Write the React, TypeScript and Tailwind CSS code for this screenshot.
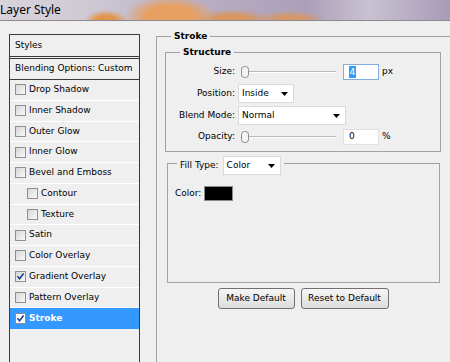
import React from 'react';

/* Photoshop "Layer Style" dialog - Stroke page */

const STYLES = [
  { label: 'Drop Shadow', checked: false, indent: false },
  { label: 'Inner Shadow', checked: false, indent: false },
  { label: 'Outer Glow', checked: false, indent: false },
  { label: 'Inner Glow', checked: false, indent: false },
  { label: 'Bevel and Emboss', checked: false, indent: false },
  { label: 'Contour', checked: false, indent: true },
  { label: 'Texture', checked: false, indent: true },
  { label: 'Satin', checked: false, indent: false },
  { label: 'Color Overlay', checked: false, indent: false },
  { label: 'Gradient Overlay', checked: true, indent: false },
  { label: 'Pattern Overlay', checked: false, indent: false },
  { label: 'Stroke', checked: true, indent: false, active: true },
];

function Check({ checked, white }: { checked: boolean; white?: boolean }) {
  return (
    <span
      className={
        white
          ? 'w-[11px] h-[11px] shrink-0 border border-[#8f8f8f] bg-white flex items-center justify-center'
          : 'w-[11px] h-[11px] shrink-0 border border-[#8f8f8f] bg-linear-to-br from-[#d6d6d6] to-[#fafafa] flex items-center justify-center'
      }
    >
      {checked && (
        <svg width="9" height="9" viewBox="0 0 9 9">
          <path d="M1.5 4.3 L3.6 6.8 L7.6 1.6" fill="none" stroke="#1f3c8c" strokeWidth="1.6" />
        </svg>
      )}
    </span>
  );
}

function Arrow() {
  return (
    <svg width="7" height="4" viewBox="0 0 7 4" className="shrink-0">
      <path d="M0 0 H7 L3.5 4 Z" fill="#000" />
    </svg>
  );
}

function Select({ value, w }: { value: string; w: string }) {
  return (
    <div className={`${w} h-[19px] bg-white border border-[#dadada] flex items-center justify-between pl-[3px] pr-[5px]`}>
      <span>{value}</span>
      <Arrow />
    </div>
  );
}

function Slider() {
  return (
    <div className="relative w-[95px] h-[12px] flex items-center">
      <div className="w-full h-[2px] border-t border-[#b9b9b9] bg-white" />
      {/* knob */}
      <svg width="8" height="12" viewBox="0 0 8 12" className="absolute left-0 top-0">
        <rect x="0.5" y="0.5" width="7" height="11" rx="3" fill="#f4f4f4" stroke="#8a8a8a" />
      </svg>
    </div>
  );
}

export default function App() {
  return (
    <div className="w-[450px] h-[362px] overflow-hidden bg-[#efefef] font-['DejaVu_Sans',sans-serif] text-[9px] text-black">
      {/* title bar, blurred desktop showing through */}
      <div className="h-[21px] border-b border-[#8c8a90] flex items-center bg-[radial-gradient(22px_11px_at_106px_21px,#e3944a_45%,transparent),radial-gradient(46px_20px_at_170px_16px,#e8a060_50%,transparent),radial-gradient(40px_12px_at_232px_21px,#d9965e_45%,transparent),radial-gradient(36px_11px_at_290px_21px,#d69868_40%,transparent),linear-gradient(to_right,#d8d3db_0%,#d0cad5_18%,#bbb1c5_40%,#ab9fba_68%,#c9c2d1_82%,#a79bb8_100%)]">
        <span className="font-['Noto_Sans',sans-serif] text-[12px] leading-none">Layer Style</span>
      </div>

      <div className="flex items-start">
        {/* styles list */}
        <div className="ml-[9px] mt-[13px] w-[131px] h-[340px] border border-[#3a3a3a] shrink-0">
          <div className="h-[22px] border-b border-[#3a3a3a] flex items-center pl-[5px]">Styles</div>
          <div className="mt-[1px] h-[22px] border-y border-[#3a3a3a] flex items-center pl-[5px]">Blending Options: Custom</div>
          {STYLES.map((s) => (
            <div
              key={s.label}
              className={
                s.active
                  ? 'h-[20.75px] flex items-center gap-[3px] pl-[5px] bg-[#3399ff] text-white font-bold'
                  : s.indent
                    ? 'h-[20.75px] flex items-center gap-[3px] pl-[17px] border-b border-white'
                    : 'h-[20.75px] flex items-center gap-[3px] pl-[5px] border-b border-white'
              }
            >
              <Check checked={s.checked} white={s.active} />
              <span>{s.label}</span>
            </div>
          ))}
        </div>

        {/* Stroke group */}
        <fieldset className="ml-[16px] mt-[9px] w-[300px] h-[340px] border border-[#a2a2a2] shrink-0">
          <legend className="ml-[14px] px-[3px] font-bold leading-[12px]">Stroke</legend>

          <fieldset className="ml-[8px] mt-[4px] w-[276px] border border-[#a2a2a2]">
            <legend className="ml-[14px] px-[3px] font-bold leading-[12px]">Structure</legend>
            <div className="pt-[5px] pb-[5px] flex flex-col gap-[3px]">
              <div className="h-[18px] flex items-center">
                <span className="w-[69px] text-right">Size:</span>
                <div className="ml-[6px]"><Slider /></div>
                <div className="ml-[7px] w-[36px] h-[16px] bg-white border border-[#7eaee2] flex items-center pl-[5px]">
                  <span className="bg-[#3399ff] text-white px-[0.5px] leading-[12px]">4</span>
                </div>
                <span className="ml-[3px]">px</span>
              </div>
              <div className="h-[19px] flex items-center">
                <span className="w-[69px] text-right">Position:</span>
                <div className="ml-[3px]"><Select value="Inside" w="w-[56px]" /></div>
              </div>
              <div className="h-[19px] flex items-center">
                <span className="w-[69px] text-right">Blend Mode:</span>
                <div className="ml-[3px]"><Select value="Normal" w="w-[108px]" /></div>
              </div>
              <div className="h-[18px] flex items-center">
                <span className="w-[69px] text-right">Opacity:</span>
                <div className="ml-[6px]"><Slider /></div>
                <div className="ml-[7px] w-[36px] h-[16px] bg-white border border-[#e0e0e0] flex items-center pl-[5px]">
                  0
                </div>
                <span className="ml-[3px]">%</span>
              </div>
            </div>
          </fieldset>

          {/* Fill type group */}
          <fieldset className="ml-[10px] mt-[5px] w-[273px] h-[126px] border border-[#a2a2a2]">
            <legend className="ml-[9px] px-[3px] h-[12px] overflow-visible">
              <div className="flex items-center gap-[4px] -mt-[1px]">
                <span>Fill Type:</span>
                <Select value="Color" w="w-[58px]" />
              </div>
            </legend>
            <div className="mt-[17px] pl-[7px] flex items-center gap-[3px]">
              <span>Color:</span>
              <div className="w-[29px] h-[15px] bg-black border border-[#8a8a8a]" />
            </div>
          </fieldset>

          <div className="ml-[8px] mt-[5px] w-[276px] flex justify-center gap-[6px]">
            <button className="w-[77px] h-[21px] rounded-[3px] border border-[#707070] bg-linear-to-b from-[#f6f6f6] to-[#dcdcdc]">
              Make Default
            </button>
            <button className="w-[88px] h-[21px] rounded-[3px] border border-[#707070] bg-linear-to-b from-[#f6f6f6] to-[#dcdcdc]">
              Reset to Default
            </button>
          </div>
        </fieldset>
      </div>
    </div>
  );
}
